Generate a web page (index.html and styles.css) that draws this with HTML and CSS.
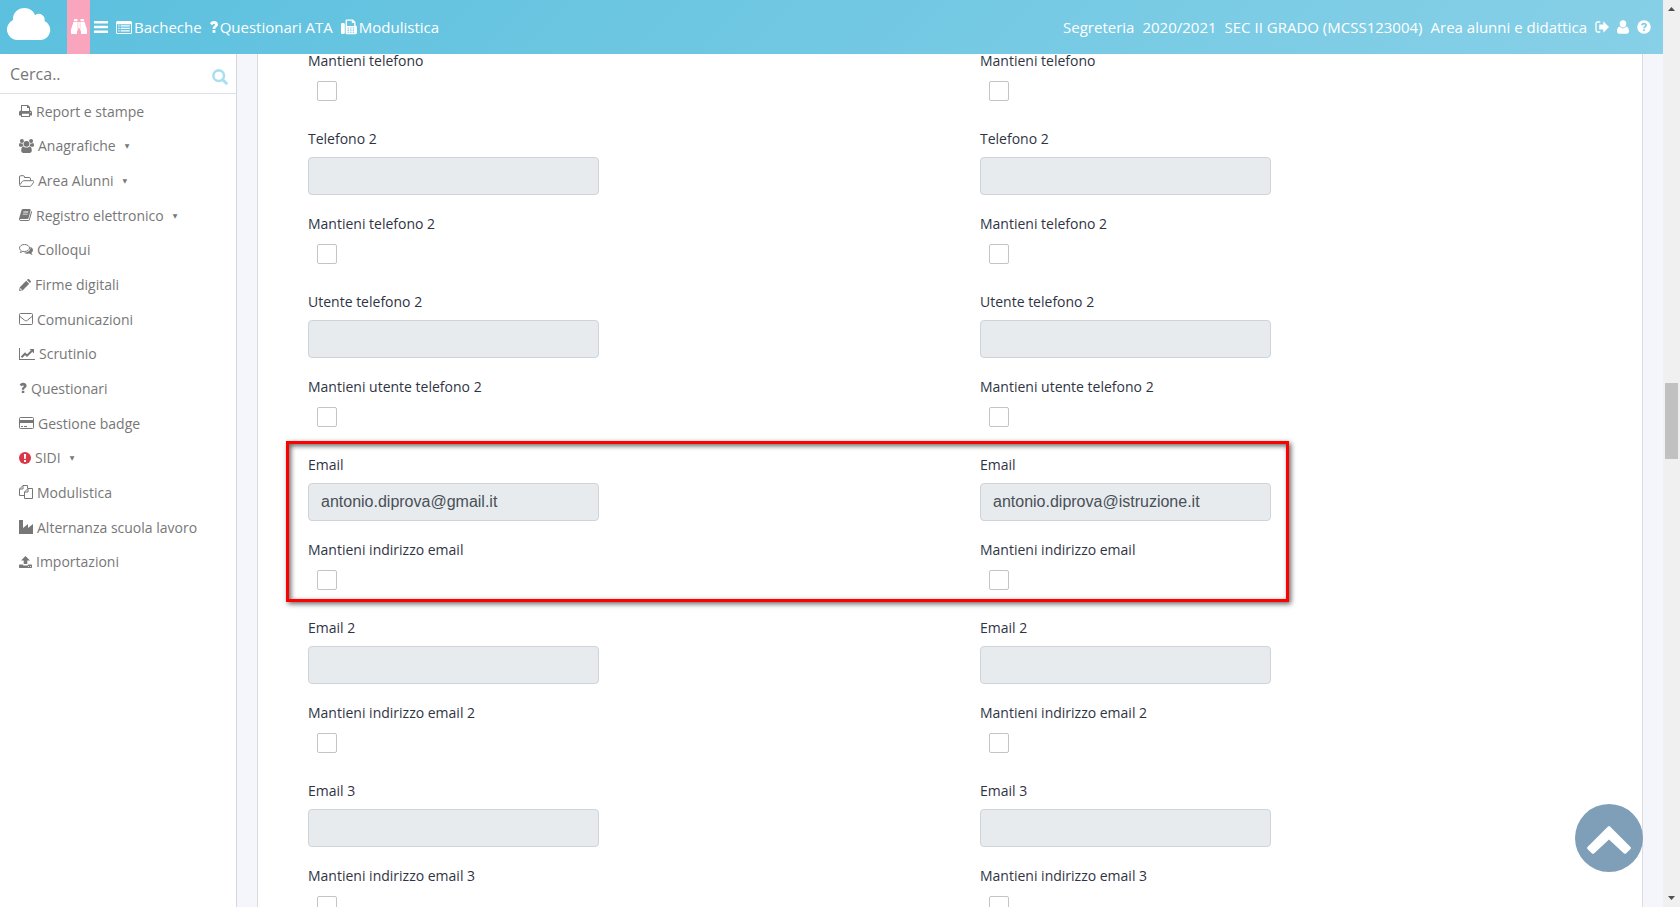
FILE: index.html
```html
<!DOCTYPE html>
<html lang="it">
<head>
  <meta charset="utf-8" />
  <meta name="viewport" content="width=device-width, initial-scale=1" />
  <title>Segreteria - Anagrafica</title>
  <link rel="stylesheet" href="styles.css">
</head>
<body>
  <div class="page">
    <header class="topbar">
      <a href="#" class="logo" aria-label="Home">
        <svg width="44" height="32" viewBox="0 0 44 32"><path d="M10.500 32A10.500 10.500 0 0 1 6 12C5.500 5 11 0 17.500 0c5 0 9 3 10.700 7.200A5.800 5.800 0 0 1 37.500 13 10 10 0 0 1 34 32z"/></svg>
      </a>
      <a href="#" class="finder" aria-label="Trova">
        <svg width="16" height="16" viewBox="0 0 16 16"><path d="M3 0h3.500v2H3zM9.500 0H13v2H9.500zM2.500 2.700h4.200v9H6V15H.8a.8.8 0 0 1-.8-.8v-3.400zM13.500 2.700H9.300v9h.7V15h5.200a.8.800 0 0 0 .8-.8v-3.400zM7.200 3h1.600v6.500H7.200z"/></svg>
      </a>
      <nav class="topnav">
        <a href="#" aria-label="Menu"><svg width="14" height="12" viewBox="0 0 14 12"><path d="M.5 0h13a.5.500 0 0 1 .5.500v1.500a.5.500 0 0 1-.5.500H.5A.5.500 0 0 1 0 2V.5A.5.500 0 0 1 .5 0zM.5 4.700h13a.5.500 0 0 1 .5.500v1.500a.5.500 0 0 1-.5.500H.5a.5.500 0 0 1-.5-.5V5.200a.5.500 0 0 1 .5-.5zM.5 9.400h13a.5.500 0 0 1 .5.500v1.500a.5.500 0 0 1-.5.500H.5a.5.500 0 0 1-.5-.5V9.900a.5.500 0 0 1 .5-.5z"/></svg></a>
        <a href="#"><svg width="16" height="13" viewBox="0 0 16 13"><path fill-rule="evenodd" d="M1.500 0h13A1.500 1.500 0 0 1 16 1.500v10a1.500 1.500 0 0 1-1.500 1.500h-13A1.500 1.500 0 0 1 0 11.500v-10A1.500 1.500 0 0 1 1.500 0zM1 3.200V12h14V3.200zM2.300 4.300h1.300v1.200H2.300zM4.600 4.300h9.200v1.200H4.600zM2.300 6.800h1.300V8H2.300zM4.600 6.800h9.200V8H4.600zM2.300 9.300h1.300v1.200H2.300zM4.600 9.300h9.200v1.200H4.600z"/></svg>Bacheche</a>
        <a href="#"><svg width="8" height="12" viewBox="0 0 8 12"><path d="M2.600 9h2.800v2.700H2.600zM0 2.500C1 .9 2.300.1 4.100.1 6.300.1 8 1.600 8 3.600c0 1.300-.7 2.100-1.700 2.700-.7.400-.9.700-.9 1.700H2.600c0-1.700.5-2.400 1.500-3.100.6-.3.900-.6.900-1.100S4.600 3 4 3c-.8 0-1.200.4-1.900 1.300z"/></svg>Questionari ATA</a>
        <a href="#"><svg width="16" height="16" viewBox="0 0 16 16"><path fill-rule="evenodd" d="M1.300 4h1.200a1.300 1.300 0 0 1 1.300 1.300v8.400A1.300 1.300 0 0 1 2.500 15H1.300A1.300 1.300 0 0 1 0 13.700V5.300A1.300 1.300 0 0 1 1.300 4zM5.700.5H12L14.500 3v3.500c.9.300 1.500 1 1.500 1.900v5a1.900 1.900 0 0 1-1.900 1.900H5.600a1 1 0 0 1-1-1V1.500a1 1 0 0 1 1.100-1zM6 1.700V7h7.200V4h-2.400V1.700zM6.600 8.500v1.100h1.300V8.500zM9.200 8.500v1.100h1.300V8.500zM11.800 8.500v1.100h1.300V8.500zM6.600 10.600v1.100h1.300v-1.100zM9.200 10.600v1.100h1.300v-1.100zM11.800 10.600v1.100h1.300v-1.100zM6.600 12.700v1.100h1.300v-1.100zM9.200 12.700v1.100h1.300v-1.100zM11.800 12.700v1.100h1.300v-1.100z"/></svg>Modulistica</a>
      </nav>
      <div class="userbar">
        <a href="#">Segreteria</a>
        <a href="#">2020/2021</a>
        <a href="#">SEC II GRADO (MCSS123004)</a>
        <a href="#">Area alunni e didattica</a>
        <a href="#" aria-label="Esci"><svg width="14" height="14" viewBox="0 0 14 14"><path d="M5.300 2H2.700A1.700 1.700 0 0 0 1 3.700v6.600A1.700 1.700 0 0 0 2.700 12h2.600" fill="none" stroke="#fff" stroke-width="1.300"/><path d="M8.300 1.300 14 7l-5.700 5.700V9.500H4.200v-5h4.100z"/></svg></a>
        <a href="#" aria-label="Utente"><svg width="12" height="14" viewBox="0 0 12 14"><path d="M6 .3a3.400 3.400 0 0 1 3.300 3.500c0 2-1.400 3.800-3.300 3.800S2.700 5.800 2.700 3.800A3.400 3.400 0 0 1 6 .3zM2.900 6.500C3.700 7.700 4.800 8.300 6 8.300s2.300-.6 3.100-1.800c1.900.3 2.900 2 2.900 5 0 1.300-.9 2.200-2.100 2.200H2.100C.9 13.700 0 12.800 0 11.500c0-3 1-4.700 2.900-5z"/></svg></a>
        <a href="#" aria-label="Aiuto"><svg width="14" height="14" viewBox="0 0 14 14"><circle cx="7" cy="7" r="6.800"/><path d="M4.800 5.200C5.200 4 6 3.600 7 3.600c1.200 0 2.100.7 2.100 1.700C9.100 6.700 7 6.700 7 8.300M7 9.300v1.700" fill="none" stroke="#7fcde6" stroke-width="1.700"/></svg></a>
      </div>
    </header>

    <div class="body">
      <aside class="sidebar">
        <form class="search">
          <input type="text" placeholder="Cerca.." aria-label="Cerca" />
          <button type="submit" aria-label="Cerca"><svg width="16" height="16" viewBox="0 0 16 16"><path d="M10.500 10.500 14.300 14.300" stroke-width="3" stroke-linecap="round"/><circle cx="6.700" cy="6.700" r="5.300" stroke-width="2.600"/></svg></button>
        </form>
        <ul class="menu">
          <li><a href="#"><svg width="13" height="14" viewBox="0 0 13 14"><path fill-rule="evenodd" d="M2 1h7l2 2v3.500a2 2 0 0 1 2 2v3h-2V13H2v-1.500H0v-3a2 2 0 0 1 2-2zM3 2v5h7V4H8V2zM3 9.800V12h7V9.800zM11.300 8a.5.500 0 1 0 0 1 .5.500 0 0 0 0-1z"/></svg>Report e stampe</a></li>
          <li><a href="#"><svg width="15" height="14" viewBox="0 0 15 14"><circle cx="2.900" cy="2" r="2"/><circle cx="12.100" cy="2" r="2"/><path d="M1.700 7.700C.6 7.700 0 7.200 0 6.200c0-1.500.4-2.200 1.200-2.200.8.700 1.700.7 2.500.4-.1 1 .2 1.800.8 2.500-.8 0-1.400.3-2 .8zM13.300 7.700c1.100 0 1.700-.5 1.700-1.500C15 4.700 14.600 4 13.800 4c-.8.700-1.700.7-2.500.4.100 1-.2 1.800-.8 2.500.8 0 1.400.3 2 .8z"/><circle cx="7.500" cy="4.800" r="2.900"/><path d="M4.500 7.400c1.900 1.600 4.100 1.600 6 0 1.600.1 2.300 1.800 2.300 4.200 0 1.500-.9 2.400-2.200 2.400H4.400c-1.300 0-2.200-.9-2.200-2.400 0-2.400.7-4.100 2.300-4.200z"/></svg>Anagrafiche<span class="caret">▼</span></a></li>
          <li><a href="#"><svg width="15" height="14" viewBox="0 0 15 14"><path class="line" d="M.5 10.500V3A1.300 1.300 0 0 1 1.800 1.700h2.400A1.300 1.300 0 0 1 5.500 3v.5h4.700a1.300 1.300 0 0 1 1.300 1.300v1.700M1.800 12.400h9.100c.5 0 1-.3 1.400-.7l2.100-3.100c.6-1 .4-1.900-.6-1.900H4.900c-.6 0-1.200.3-1.600.8l-2.200 3c-.8 1.100-.4 1.900.7 1.900z"/></svg>Area Alunni<span class="caret">▼</span></a></li>
          <li><a href="#"><svg width="13" height="14" viewBox="0 0 13 14"><path fill-rule="evenodd" d="M4.200 1h6.500c.8 0 1.100.6.900 1.400L9.600 10c-.2.700-.7 1-1.500 1H1.700c-.6 0-.8.300-.6.700.2.300.6.400 1 .4h6.800c.6 0 .9-.3 1.100-.9L12.200 3c.7.300.9.800.7 1.500l-2 7.100c-.3.900-.9 1.400-1.800 1.400H2C.8 13 0 12.100 0 10.800L2.600 2C2.900 1.300 3.400 1 4.200 1zM4.500 3.500l-.3.900h4.900l.3-.9zM3.900 5.700l-.3.900h4.900l.3-.9z"/></svg>Registro elettronico<span class="caret">▼</span></a></li>
          <li><a href="#"><svg width="14" height="14" viewBox="0 0 14 14"><path class="line" d="M5.500 1.500c2.800 0 5 1.600 5 3.500s-2.200 3.500-5 3.500c-.6 0-1.100-.1-1.600-.2-.8.600-1.700 1-2.700 1.100.5-.5.900-1.100 1-1.800C1.100 6.900.5 6 .5 5c0-1.900 2.200-3.500 5-3.500z"/><path d="M11.400 3.700C13 4.400 14 5.700 14 7c0 1.100-.6 2.100-1.600 2.800.2.800.6 1.400 1.200 2-1.200 0-2.200-.4-3.200-1.200-2.300.4-4.300-.1-5.600-1.100 3.900.1 7.400-2 6.600-5.800z"/></svg>Colloqui</a></li>
          <li><a href="#"><svg width="12" height="14" viewBox="0 0 12 14"><path fill-rule="evenodd" d="M.8 9.200 7.200 2.800l3 3-6.400 6.400L0 13zM1.500 10l-.4 1.900 1.900-.4zM7.900 2.100l.8-.8c.4-.4 1-.4 1.400 0l1.600 1.600c.4.400.4 1 0 1.400l-.8.800z"/></svg>Firme digitali</a></li>
          <li><a href="#"><svg width="14" height="14" viewBox="0 0 14 14"><path class="line" d="M1.500 1.500h11a1 1 0 0 1 1 1v9a1 1 0 0 1-1 1h-11a1 1 0 0 1-1-1v-9a1 1 0 0 1 1-1zM.5 4l5 4.200c1 .8 2 .8 3 0l5-4.200"/></svg>Comunicazioni</a></li>
          <li><a href="#"><svg width="16" height="14" viewBox="0 0 16 14"><path d="M0 1h1v11h15v1H0z"/><path d="M2.500 10.200 6 6.700l2 2L12.700 4" fill="none" stroke="#777" stroke-width="2"/><path d="M10.500 2H15v4.500z"/></svg>Scrutinio</a></li>
          <li><a href="#"><svg width="8" height="14" viewBox="0 0 8 14"><path d="M2.800 9.700h2.500V12H2.800zM.6 3.700C1.400 2.400 2.500 1.700 4.100 1.700c1.900 0 3.500 1.300 3.500 3 0 1.200-.7 1.900-1.500 2.400-.7.400-.8.700-.8 1.600H2.800c0-1.500.4-2.200 1.300-2.800.5-.3.700-.5.700-.9S4.500 4.400 4 4.400c-.6 0-.9.200-1.500.9z"/></svg>Questionari</a></li>
          <li><a href="#"><svg width="15" height="14" viewBox="0 0 15 14"><path class="line" d="M1.500 1.500h12a1 1 0 0 1 1 1v9a1 1 0 0 1-1 1h-12a1 1 0 0 1-1-1v-9a1 1 0 0 1 1-1z"/><path d="M1 4h13v3H1zM2 10h2v1H2zM5 10h3v1H5z"/></svg>Gestione badge</a></li>
          <li><a href="#"><svg width="12" height="14" viewBox="0 0 12 14"><circle cx="6" cy="7" r="6" fill="#dc3545"/><path d="M4.900 3h2.200l-.3 5H5.200zM5 9h2v2H5z" fill="#fff"/></svg>SIDI<span class="caret">▼</span></a></li>
          <li><a href="#"><svg width="14" height="14" viewBox="0 0 14 14"><path class="line" d="M5.500 10.500h-5V4l3.500-3.500h4.500v3M4 .5V4H.5M9 3.500h4.500v10h-8V7zM9 3.500V7H5.500"/></svg>Modulistica</a></li>
          <li><a href="#"><svg width="14" height="14" viewBox="0 0 14 14"><path d="M0 0h4v8l5-4v4l5-4v10H0z"/></svg>Alternanza scuola lavoro</a></li>
          <li><a href="#"><svg width="13" height="14" viewBox="0 0 13 14"><path fill-rule="evenodd" d="M6.500 1 11 5.500H8.300V9H4.700V5.500H2zM.7 9.500h3c.3.800.9 1 1.600 1h2.400c.7 0 1.300-.2 1.600-1h3c.4 0 .7.300.7.700v2.100c0 .4-.3.700-.7.700H.7a.7.700 0 0 1-.7-.7v-2.100c0-.4.300-.7.700-.7zM9 11.300v.8h1v-.8zM11 11.300v.8h1v-.8z"/></svg>Importazioni</a></li>
        </ul>
      </aside>

      <main class="content">
        <form class="card">
          <div class="row">
            <div class="col">
              <label for="keep-tel-a">Mantieni telefono</label>
              <input type="checkbox" id="keep-tel-a" />
            </div>
            <div class="col">
              <label for="keep-tel-b">Mantieni telefono</label>
              <input type="checkbox" id="keep-tel-b" />
            </div>
          </div>

          <div class="row">
            <div class="col">
              <label for="tel2-a">Telefono 2</label>
              <input type="text" id="tel2-a" disabled />
              <label for="keep-tel2-a">Mantieni telefono 2</label>
              <input type="checkbox" id="keep-tel2-a" />
            </div>
            <div class="col">
              <label for="tel2-b">Telefono 2</label>
              <input type="text" id="tel2-b" disabled />
              <label for="keep-tel2-b">Mantieni telefono 2</label>
              <input type="checkbox" id="keep-tel2-b" />
            </div>
          </div>

          <div class="row">
            <div class="col">
              <label for="user-tel2-a">Utente telefono 2</label>
              <input type="text" id="user-tel2-a" disabled />
              <label for="keep-user-tel2-a">Mantieni utente telefono 2</label>
              <input type="checkbox" id="keep-user-tel2-a" />
            </div>
            <div class="col">
              <label for="user-tel2-b">Utente telefono 2</label>
              <input type="text" id="user-tel2-b" disabled />
              <label for="keep-user-tel2-b">Mantieni utente telefono 2</label>
              <input type="checkbox" id="keep-user-tel2-b" />
            </div>
          </div>

          <div class="row highlight">
            <div class="col">
              <label for="email-a">Email</label>
              <input type="text" id="email-a" value="antonio.diprova@gmail.it" disabled />
              <label for="keep-email-a">Mantieni indirizzo email</label>
              <input type="checkbox" id="keep-email-a" />
            </div>
            <div class="col">
              <label for="email-b">Email</label>
              <input type="text" id="email-b" value="antonio.diprova@istruzione.it" disabled />
              <label for="keep-email-b">Mantieni indirizzo email</label>
              <input type="checkbox" id="keep-email-b" />
            </div>
          </div>

          <div class="row">
            <div class="col">
              <label for="email2-a">Email 2</label>
              <input type="text" id="email2-a" disabled />
              <label for="keep-email2-a">Mantieni indirizzo email 2</label>
              <input type="checkbox" id="keep-email2-a" />
            </div>
            <div class="col">
              <label for="email2-b">Email 2</label>
              <input type="text" id="email2-b" disabled />
              <label for="keep-email2-b">Mantieni indirizzo email 2</label>
              <input type="checkbox" id="keep-email2-b" />
            </div>
          </div>

          <div class="row">
            <div class="col">
              <label for="email3-a">Email 3</label>
              <input type="text" id="email3-a" disabled />
              <label for="keep-email3-a">Mantieni indirizzo email 3</label>
              <input type="checkbox" id="keep-email3-a" />
            </div>
            <div class="col">
              <label for="email3-b">Email 3</label>
              <input type="text" id="email3-b" disabled />
              <label for="keep-email3-b">Mantieni indirizzo email 3</label>
              <input type="checkbox" id="keep-email3-b" />
            </div>
          </div>
        </form>
      </main>
    </div>
  </div>

  <div class="scrollbar">
    <svg width="7" height="4" viewBox="0 0 7 4"><path d="M0 4 3.500 0 7 4z"/></svg>
    <div class="thumb"></div>
    <svg width="7" height="4" viewBox="0 0 7 4"><path d="M0 0h7L3.500 4z"/></svg>
  </div>

  <button type="button" class="to-top" aria-label="Torna su">
    <svg width="44" height="30" viewBox="0 0 44 30"><path d="M21 1.400a1.500 1.500 0 0 1 2 0l20.500 20.500a1.500 1.500 0 0 1 0 2l-4.500 4.500a1.500 1.500 0 0 1-2 0L22 14.500 7 28.400a1.500 1.500 0 0 1-2 0L.5 23.900a1.500 1.500 0 0 1 0-2z"/></svg>
  </button>
</body>
</html>
```
FILE: styles.css
```css
* {
  box-sizing: border-box;
}
body {
  display: flex;
  height: 100vh;
  margin: 0;
  font-family: "Open Sans", "Liberation Sans", sans-serif;
  font-size: 14px;
  background: #f5f6fb;
  overflow: hidden;
}
a {
  color: inherit;
  text-decoration: none;
}
svg {
  flex: none;
  fill: currentColor;
}
.page {
  display: flex;
  flex-direction: column;
  flex: 1;
  min-width: 0;
}

/* top bar */
.topbar {
  display: flex;
  align-items: center;
  flex: none;
  height: 54px;
  color: #fff;
  font-size: 15px;
  background: linear-gradient(135deg, #5bc0de, #87d0e7);
  white-space: nowrap;
  position: relative;
  z-index: 2;
}
.topbar a {
  display: flex;
  align-items: center;
}
.logo {
  width: 67px;
  height: 54px;
  padding: 0 0 6px 7px;
}
.finder {
  justify-content: center;
  width: 23px;
  height: 54px;
  background: #f8a5bd;
}
.topnav {
  display: flex;
  gap: 8px;
  padding-left: 4px;
}
.topnav a {
  gap: 2px;
}
.userbar {
  display: flex;
  gap: 8px;
  margin-left: auto;
  padding-right: 12px;
}

/* sidebar */
.body {
  display: flex;
  flex: 1;
  min-height: 0;
}
.sidebar {
  flex: none;
  width: 237px;
  background: #fff;
  border-right: 1px solid #d5d7db;
}
.search {
  display: flex;
  align-items: center;
  height: 40px;
  padding: 0 8px 0 10px;
  border-bottom: 1px solid #dfe3e5;
}
.search input {
  flex: 1;
  min-width: 0;
  padding: 0;
  border: none;
  outline: none;
  color: #777;
  font-family: inherit;
  font-size: 16px;
}
.search input::placeholder {
  color: #777;
}
.search button {
  display: flex;
  padding: 6px 0 0;
  border: none;
  background: none;
  color: #a9dfef;
}
.search svg {
  fill: none;
  stroke: currentColor;
}
.menu {
  display: grid;
  grid-auto-rows: 1fr;
  height: 485px;
  margin: 0;
  padding: 0 0 0 19px;
  list-style: none;
  color: #777;
}
.menu a {
  display: flex;
  align-items: center;
  gap: 4px;
  height: 100%;
}
.caret {
  margin-left: 5px;
  font-family: "DejaVu Sans", sans-serif;
  font-size: 6px;
}
.line {
  fill: none;
  stroke: currentColor;
}

/* form */
.content {
  flex: 1;
  min-width: 0;
  padding: 0 20px;
}
.card {
  margin-top: -4px;
  padding: 0 20px;
  background: #fff;
  border: 1px solid #d8dcdd;
  border-width: 0 1px;
}
.row {
  display: grid;
  grid-template-columns: 1fr 1fr;
  padding-bottom: 27px;
  position: relative;
}
.col {
  display: flex;
  flex-direction: column;
  align-items: flex-start;
  padding: 0 60px 0 30px;
}
.col label {
  color: #2f3444;
  font-size: 14px;
  font-weight: 500;
  line-height: 21px;
}
.col input[type="text"] {
  width: 50%;
  height: 38px;
  margin: 8px 0 18px;
  padding: 0 12px;
  border: 1px solid #ced4da;
  border-radius: 4px;
  color: #495057;
  font-family: "Liberation Sans", Arial, sans-serif;
  font-size: 16px;
  background: #e7ebee;
}
.col input[type="checkbox"] {
  appearance: none;
  width: 20px;
  height: 20px;
  margin: 10px 0 0 9px;
  border: 1px solid #c4c4c4;
  border-radius: 2px;
  background: #fff;
}
.highlight::after {
  content: "";
  position: absolute;
  top: -13px;
  right: calc(25% - 3px);
  bottom: 15px;
  left: 8px;
  border: 3px solid #f00;
  box-shadow: 2px 2px 5px rgba(0, 0, 0, 0.6), inset 2px 2px 5px rgba(0, 0, 0, 0.6);
  pointer-events: none;
}

/* page scrollbar */
.scrollbar {
  display: flex;
  flex-direction: column;
  align-items: center;
  justify-content: space-between;
  flex: none;
  width: 17px;
  padding: 7px 0;
  color: #505050;
  background: #f0f0f0;
}
.thumb {
  width: 13px;
  height: 76px;
  margin-bottom: 66px;
  background: #c1c1c1;
}

.to-top {
  display: flex;
  align-items: center;
  justify-content: center;
  position: fixed;
  right: 37px;
  bottom: 35px;
  width: 68px;
  height: 68px;
  padding: 4px 0 0;
  border: none;
  border-radius: 50%;
  color: #fff;
  background: #7f9fb9;
  cursor: pointer;
}
```
